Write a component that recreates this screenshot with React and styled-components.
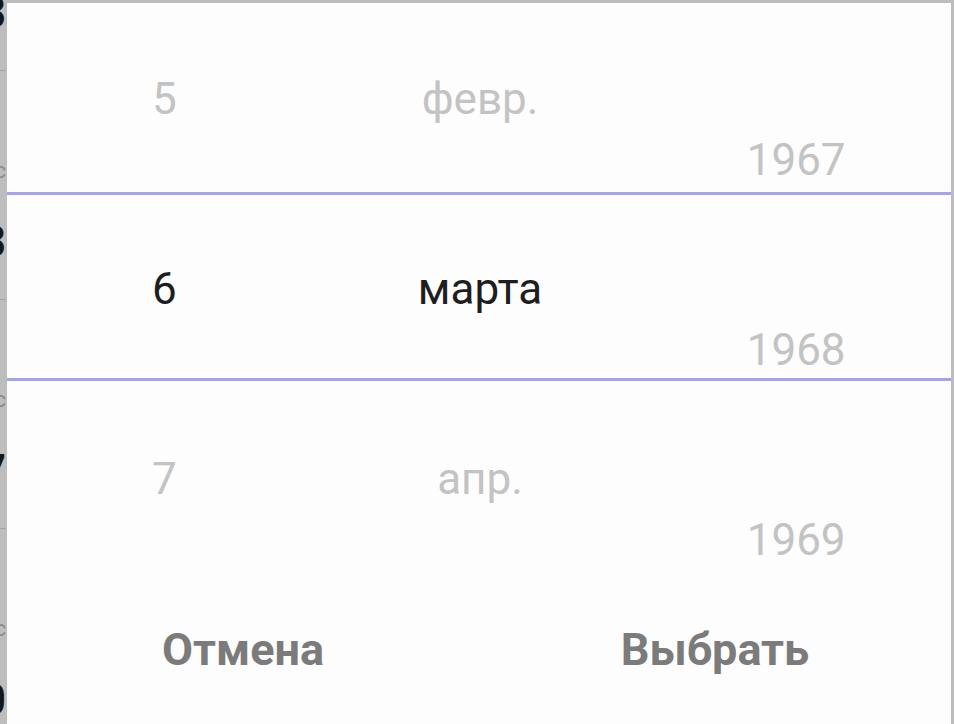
import React from 'react';
import styled, { createGlobalStyle } from 'styled-components';

const Global = createGlobalStyle`
  html, body {
    margin: 0;
    padding: 0;
    background: #bdbdbd;
    overflow: hidden;
  }
`;

const Screen = styled.div`
  position: relative;
  width: 954px;
  height: 724px;
  overflow: hidden;
  background: #bdbdbd;
  font-family: Roboto, "Noto Sans", "Liberation Sans", sans-serif;
`;

const BackList = styled.div`
  display: flex;
  flex-direction: column;
  width: 6px;
  margin-top: -158px;
`;

const BackItem = styled.div`
  box-sizing: border-box;
  display: flex;
  flex-direction: column;
  align-items: flex-end;
  height: 229px;
  padding-top: 85px;
  border-bottom: 1px solid #a4a4a4;
`;

const BackCaption = styled.div`
  font-size: 22px;
  line-height: 30px;
  color: #8c8c8c;
  white-space: nowrap;
`;

const BackValue = styled.div`
  margin-top: 32px;
  font-size: 44px;
  font-weight: 700;
  line-height: 48px;
  color: #161616;
  white-space: nowrap;
`;

const Dialog = styled.div`
  position: absolute;
  top: 3px;
  left: 7px;
  width: 944px;
  bottom: -40px;
  background: #fdfdfd;
  display: flex;
  flex-direction: column;
  padding-top: 1px;
  box-sizing: border-box;
`;

const Wheel = styled.div`
  position: relative;
  height: 570px;
  display: grid;
  grid-template-columns: repeat(3, 1fr);
  overflow: hidden;
`;

const Column = styled.div`
  display: flex;
  flex-direction: column;
  align-items: center;
  padding-top: ${p => p.$offset || 0}px;
  padding-left: ${p => p.$indent || 0}px;
`;

const Item = styled.div`
  height: 190px;
  line-height: 190px;
  font-size: 44px;
  color: ${p => (p.$active ? '#1e1e1e' : '#c3c3c3')};
  white-space: nowrap;
`;

const Divider = styled.div`
  position: absolute;
  left: 0;
  right: 0;
  top: ${p => p.$top}px;
  height: 3px;
  background: #a4a4ee;
`;

const Actions = styled.div`
  display: grid;
  grid-template-columns: 1fr 1fr;
  height: 152px;
`;

const ActionButton = styled.button`
  appearance: none;
  border: 0;
  background: transparent;
  padding: 0;
  font-family: Roboto, "Noto Sans", sans-serif;
  font-size: 45px;
  font-weight: 700;
  color: #7b7b7b;
  line-height: 152px;
  text-align: center;
`;

const background = [
  { caption: 'Дата', value: '3' },
  { caption: 'с', value: '3' },
  { caption: 'с', value: '7' },
  { caption: 'с', value: '0' },
];

const days = ['5', '6', '7'];
const months = ['февр.', 'марта', 'апр.'];
const years = ['1967', '1968', '1969'];

export default function App() {
  return (
    <>
      <Global />
      <Screen>
        <BackList>
          {background.map((b, i) => (
            <BackItem key={i}>
              <BackCaption>{b.caption}</BackCaption>
              <BackValue>{b.value}</BackValue>
            </BackItem>
          ))}
        </BackList>
        <Dialog>
          <Wheel>
            <Column>
              {days.map((d, i) => (
                <Item key={d} $active={i === 1}>{d}</Item>
              ))}
            </Column>
            <Column $indent={2}>
              {months.map((m, i) => (
                <Item key={m} $active={i === 1}>{m}</Item>
              ))}
            </Column>
            <Column $offset={61} $indent={5}>
              {years.map(y => (
                <Item key={y}>{y}</Item>
              ))}
            </Column>
            <Divider $top={188} />
            <Divider $top={374} />
          </Wheel>
          <Actions>
            <ActionButton>Отмена</ActionButton>
            <ActionButton>Выбрать</ActionButton>
          </Actions>
        </Dialog>
      </Screen>
    </>
  );
}
